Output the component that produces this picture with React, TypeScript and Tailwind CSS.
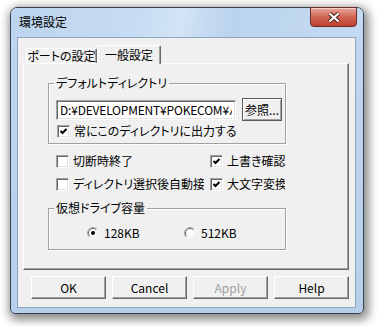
import React from 'react';

function CheckBox({ checked = false }: { checked?: boolean }) {
  return (
    <span className="relative w-[13px] h-[13px] shrink-0 bg-white border border-t-[#a0a0a0] border-l-[#a0a0a0] border-r-white border-b-white shadow-[inset_1px_1px_0_#696969,inset_-1px_-1px_0_#e3e3e3]">
      {checked && (
        <svg className="absolute left-0 top-0" width="11" height="11" viewBox="0 0 11 11">
          <path d="M2.5 5 L4.5 7 L8.5 3" fill="none" stroke="#000" strokeWidth="2" />
        </svg>
      )}
    </span>
  );
}

function Radio({ checked = false }: { checked?: boolean }) {
  return (
    <svg className="shrink-0" width="12" height="12" viewBox="0 0 12 12">
      <circle cx="6" cy="6" r="5.5" fill="#fff" />
      <path d="M2.1 9.9 A5.5 5.5 0 0 1 9.9 2.1" fill="none" stroke="#a0a0a0" />
      <path d="M2.1 9.9 A5.5 5.5 0 0 0 9.9 2.1" fill="none" stroke="#ffffff" />
      <path d="M2.8 9.2 A4.5 4.5 0 0 1 9.2 2.8" fill="none" stroke="#696969" />
      <path d="M2.8 9.2 A4.5 4.5 0 0 0 9.2 2.8" fill="none" stroke="#e3e3e3" />
      {checked && <circle cx="6" cy="6" r="2" fill="#000" />}
    </svg>
  );
}

function Button({ label, disabled = false }: { label: string; disabled?: boolean }) {
  return (
    <div
      className={
        disabled
          ? 'w-[75px] h-[23px] flex items-center justify-center border border-t-white border-l-white border-r-[#696969] border-b-[#696969] shadow-[inset_-1px_-1px_0_#a0a0a0] text-[#a0a0a0]'
          : 'w-[75px] h-[23px] flex items-center justify-center border border-t-white border-l-white border-r-[#696969] border-b-[#696969] shadow-[inset_-1px_-1px_0_#a0a0a0]'
      }
    >
      {label}
    </div>
  );
}

export default function App() {
  return (
    <div className="w-[378px] h-[326px] bg-white overflow-hidden pt-[7px] pl-[10px] font-['Noto_Sans_CJK_JP','Noto_Sans',sans-serif] [font-feature-settings:'palt'] text-[12px] leading-[14px] text-black">
      <div className="w-[354px] h-[307px] flex flex-col rounded-t-[7px] rounded-b-[5px] border border-[#36414f] bg-gradient-to-b from-[#c0d7f0] to-[#b6cfeb] shadow-[2px_3px_10px_3px_rgba(0,0,0,0.45)]">
        {/* title bar */}
        <div className="h-[29px] shrink-0 flex items-start justify-between pl-[8px] pr-[6px] rounded-t-[6px] bg-[linear-gradient(100deg,#bcd4ee_0%,#c6dcf2_35%,#d2e4f6_48%,#bbd3ed_62%,#c4daf1_100%)]">
          <span className="mt-[6px] leading-[15px]">環境設定</span>
          <div className="-mt-px w-[47px] h-[20px] rounded-b-[4px] border border-[#6b2c26] bg-gradient-to-b from-[#e8a89d] via-[#d06555] to-[#c0402f] shadow-[inset_0_1px_0_rgba(255,255,255,0.45)] flex items-center justify-center">
            <svg width="14" height="11" viewBox="0 0 14 11">
              <path d="M2.5 1.5 L11.5 9.5 M11.5 1.5 L2.5 9.5" stroke="#4a1f1b" strokeWidth="4.2" />
              <path d="M2.5 1.5 L11.5 9.5 M11.5 1.5 L2.5 9.5" stroke="#fff" strokeWidth="2.2" />
            </svg>
          </div>
        </div>

        {/* client area */}
        <div className="ml-[6px] w-[339px] h-[271px] border border-[#8ea4bf] bg-[#f0f0f0] pt-[7px] pl-[5px] pr-[6px] pb-[8px] flex flex-col">
          {/* tabs */}
          <div className="h-[18px] flex items-end pl-[3px]">
            <div className="w-[71px] h-[15px] flex items-center justify-center border border-b-0 border-t-white border-l-white border-r-[#696969] rounded-t-[2px] shadow-[inset_-1px_0_0_#a0a0a0]">
              ポートの設定
            </div>
            <div className="relative z-10 -mb-px w-[64px] h-[19px] flex items-start justify-center pt-[2px] bg-[#f0f0f0] border border-b-0 border-t-white border-l-white border-r-[#696969] rounded-t-[2px] shadow-[inset_-1px_0_0_#a0a0a0]">
              一般設定
            </div>
          </div>

          {/* tab panel */}
          <div className="w-[326px] h-[207px] shrink-0 border border-t-white border-l-white border-r-[#696969] border-b-[#696969] shadow-[inset_-1px_-1px_0_#a0a0a0] pl-[24px] pt-[19px]">
            {/* default directory group */}
            <div className="relative w-[238px] h-[61px] border border-[#a0a0a0] shadow-[inset_1px_1px_0_#fff,1px_1px_0_#fff] pt-[14px] pl-[7px]">
              <span className="absolute -top-[8px] left-[5px] px-[2px] bg-[#f0f0f0]">デフォルトディレクトリ</span>
              <div className="h-[23px] flex items-center gap-[6px]">
                <div className="w-[180px] h-[20px] flex items-center pl-[3px] bg-white border border-t-[#a0a0a0] border-l-[#a0a0a0] border-r-white border-b-white shadow-[inset_1px_1px_0_#696969,inset_-1px_-1px_0_#e3e3e3]">
                  <span className="block w-[172px] overflow-hidden whitespace-nowrap tracking-[-0.2px] [font-feature-settings:normal]">
                    D:¥DEVELOPMENT¥POKECOM¥パス
                  </span>
                </div>
                <div className="w-[40px] h-[23px] flex items-center justify-center border border-[#5c5c5c] shadow-[inset_1px_1px_0_#fff,inset_-1px_-1px_0_#a0a0a0]">
                  参照...
                </div>
              </div>
              <div className="h-[16px] mt-[2px] pl-px flex items-center gap-[4px]">
                <CheckBox checked />
                <span className="whitespace-nowrap">常にこのディレクトリに出力する</span>
              </div>
            </div>

            {/* option checkboxes */}
            <div className="mt-[9px] ml-[8px] flex flex-col gap-[7px]">
              <div className="h-[16px] flex">
                <div className="w-[154px] flex items-center gap-[4px]">
                  <CheckBox />
                  <span className="whitespace-nowrap">切断時終了</span>
                </div>
                <div className="w-[75px] flex items-center gap-[4px] overflow-hidden">
                  <CheckBox checked />
                  <span className="whitespace-nowrap">上書き確認</span>
                </div>
              </div>
              <div className="h-[16px] flex">
                <div className="w-[154px] flex items-center gap-[4px]">
                  <CheckBox />
                  <span className="w-[131px] overflow-hidden whitespace-nowrap">ディレクトリ選択後自動接続</span>
                </div>
                <div className="w-[75px] flex items-center gap-[4px] overflow-hidden">
                  <CheckBox checked />
                  <span className="whitespace-nowrap">大文字変換</span>
                </div>
              </div>
            </div>

            {/* virtual drive group */}
            <div className="relative mt-[16px] w-[238px] h-[42px] border border-[#a0a0a0] shadow-[inset_1px_1px_0_#fff,1px_1px_0_#fff] pt-[17px] pl-[38px]">
              <span className="absolute -top-[8px] left-[5px] px-[2px] bg-[#f0f0f0]">仮想ドライブ容量</span>
              <div className="h-[14px] flex items-center">
                <div className="w-[97px] flex items-center gap-[5px]">
                  <Radio checked />
                  <span>128KB</span>
                </div>
                <div className="flex items-center gap-[5px]">
                  <Radio />
                  <span>512KB</span>
                </div>
              </div>
            </div>
          </div>

          {/* dialog buttons */}
          <div className="mt-[6px] flex justify-end gap-[6px]">
            <Button label="OK" />
            <Button label="Cancel" />
            <Button label="Apply" disabled />
            <Button label="Help" />
          </div>
        </div>
      </div>
    </div>
  );
}
